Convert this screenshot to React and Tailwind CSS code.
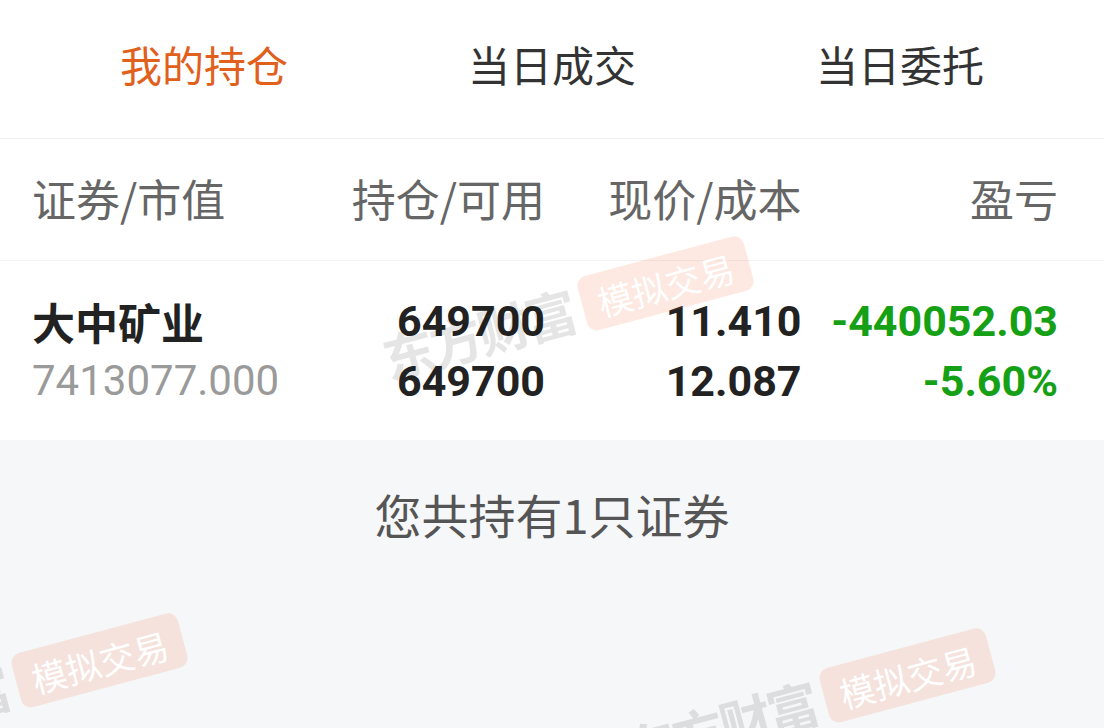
import React from "react";

const tabs = ["我的持仓", "当日成交", "当日委托"];

// 东方财富 + 模拟交易 watermark unit
const Watermark = ({ className }) => (
  <div
    className={`pointer-events-none absolute flex w-max items-center gap-[10px] whitespace-nowrap -translate-x-1/2 -translate-y-1/2 rotate-[-15deg] ${className}`}
  >
    <span className="shrink-0 text-[52px] font-bold leading-none tracking-[-3px] text-black/[0.1]">
      东方财富
    </span>
    <span className="flex h-[56px] w-[172px] shrink-0 items-center justify-center rounded-[10px] bg-[#f06e3c]/[0.15] text-[35px] leading-none text-white">
      模拟交易
    </span>
  </div>
);

const App = () => {
  return (
    <div className="relative h-[728px] w-[1104px] overflow-hidden bg-[#f6f7f9] font-['Noto_Sans_CJK_SC','Noto_Sans',sans-serif]">
      <div className="bg-white">
        {/* Tabs */}
        <div className="flex h-[139px] items-center border-b border-[#eeeeee] px-[30px] pb-[10px]">
          {tabs.map((t, i) => (
            <div
              key={t}
              className={`flex-1 text-center text-[42px] leading-none ${
                i === 0 ? "text-[#e0601c]" : "text-[#333333]"
              }`}
            >
              {t}
            </div>
          ))}
        </div>

        {/* Column header */}
        <div className="grid h-[122px] grid-cols-4 items-center border-b border-[#f3f3f3] pl-[32px] pr-[46px] pb-[4px] text-[44px] leading-none text-[#666666]">
          <div>证券/市值</div>
          <div className="text-right">持仓/可用</div>
          <div className="text-right">现价/成本</div>
          <div className="text-right">盈亏</div>
        </div>

        {/* Position row */}
        <div className="grid h-[179px] grid-cols-4 content-center pl-[32px] pr-[46px] font-['Roboto','Noto_Sans_CJK_SC',sans-serif] text-[43px] leading-[60px]">
          <div>
            <div className="font-['Noto_Sans_CJK_SC',sans-serif] font-bold text-[#222222]">
              大中矿业
            </div>
            <div className="text-[42px] text-[#9a9a9a]">7413077.000</div>
          </div>
          <div className="text-right font-bold text-[#222222]">
            <div>649700</div>
            <div>649700</div>
          </div>
          <div className="text-right font-bold text-[#222222]">
            <div>11.410</div>
            <div>12.087</div>
          </div>
          <div className="text-right font-bold text-[#15a015]">
            <div>-440052.03</div>
            <div>-5.60%</div>
          </div>
        </div>
      </div>

      <div className="pt-[44px] text-center text-[47px] leading-[60px] text-[#555555]">
        您共持有1只证券
      </div>

      <Watermark className="left-[566px] top-[310px]" />
      <Watermark className="left-[0px] top-[687px]" />
      <Watermark className="left-[808px] top-[702px]" />
    </div>
  );
};

export default App;
